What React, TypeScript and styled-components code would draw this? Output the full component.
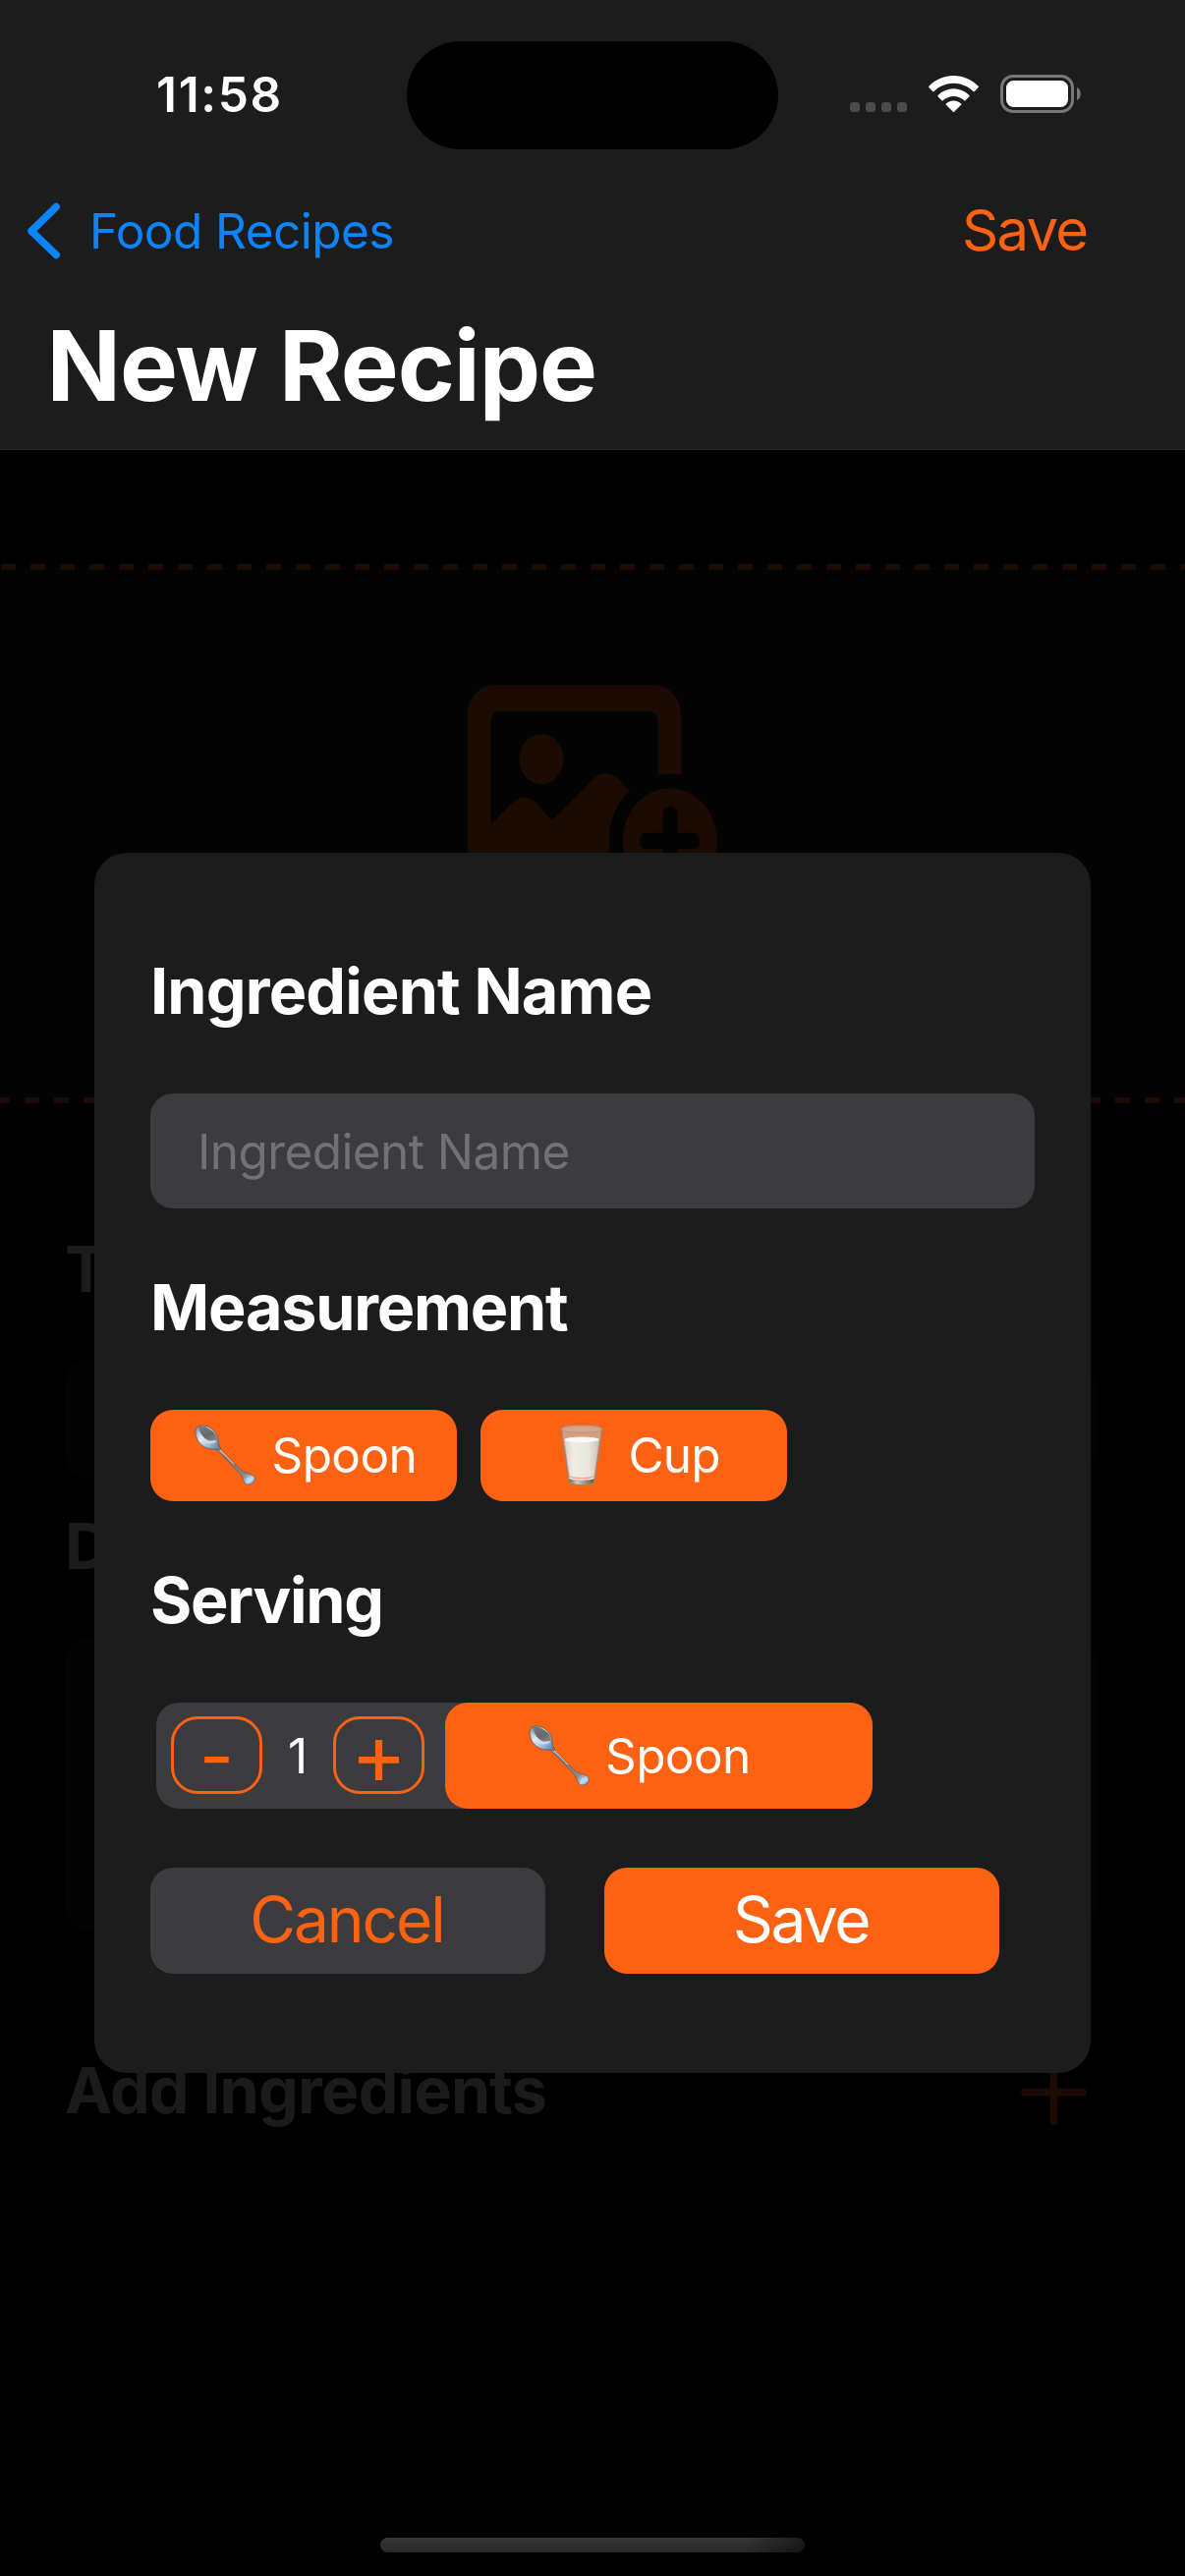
import React, { useState } from 'react';
import styled, { createGlobalStyle } from 'styled-components';

const orange = '#fc6212';
const surface = '#1c1c1c';
const control = '#3c3c3e';
const dimOrange = '#1c0b02';
const dimText = '#1b1b1b';
const dimField = '#030303';

const GlobalStyle = createGlobalStyle`
  * { box-sizing: border-box; }
  body { margin: 0; background: #000; }
`;

const Screen = styled.div`
  position: relative;
  width: 1206px;
  height: 2622px;
  overflow: hidden;
  background: #000;
  font-family: Inter, "Liberation Sans", sans-serif;
  display: flex;
  flex-direction: column;
`;

const Text = styled.span<{ $size: number; $weight?: number; $track?: number; $color?: string }>`
  display: block;
  font-size: ${p => p.$size}px;
  font-weight: ${p => p.$weight ?? 400};
  letter-spacing: ${p => p.$track ?? 0}px;
  color: ${p => p.$color ?? '#fff'};
  line-height: 80px;
  white-space: pre;
`;

/* Header */

const Header = styled.header`
  height: 458px;
  background: ${surface};
  border-bottom: 1px solid #2c2c2c;
`;

const StatusBar = styled.div`
  display: grid;
  grid-template-columns: 414px 378px 414px;
  height: 192px;
`;

const Clock = styled.div`
  padding: 56px 0 0 159px;
`;

const Island = styled.div`
  height: 110px;
  margin-top: 42px;
  border-radius: 55px;
  background: #000;
`;

const Indicators = styled.div`
  display: flex;
  align-items: flex-start;
  padding: 76px 0 0 73px;
`;

const Signal = styled.div`
  display: flex;
  gap: 6px;
  margin: 28px 22px 0 0;
`;

const SignalDot = styled.i`
  width: 10px;
  height: 10px;
  border-radius: 3.5px;
  background: #4c4c4c;
`;

const Wifi = styled.svg`
  width: 51px;
  height: 37px;
  margin: 1px 22px 0 0;
`;

const Battery = styled.svg`
  width: 82px;
  height: 39px;
`;

const NavBar = styled.nav`
  display: flex;
  align-items: center;
  justify-content: space-between;
  height: 86px;
  padding: 0 99.5px 0 26px;
`;

const BackLink = styled.div`
  display: flex;
  align-items: center;
`;

const Chevron = styled.svg`
  width: 38px;
  height: 60px;
  margin-right: 27px;
`;

const NavSave = styled.div`
  margin-top: -2px;
`;

const TitleRow = styled.h1`
  margin: 0;
  padding: 54px 0 0 47.5px;
`;

/* Dimmed form behind the dialog */

const Form = styled.main`
  display: flex;
  flex-direction: column;
`;

const PhotoPanel = styled.div`
  display: flex;
  justify-content: center;
  align-items: flex-start;
  height: 549px;
  margin-top: 116px;
  padding-top: 123px;
  background:
    repeating-linear-gradient(90deg, transparent 0 1px, ${dimOrange} 1px 16px, transparent 16px 30px) top / 100% 6px no-repeat,
    repeating-linear-gradient(90deg, ${dimOrange} 0 10px, transparent 10px 25px, ${dimOrange} 25px 30px) bottom / 100% 6px no-repeat,
    linear-gradient(${dimField}, ${dimField}) center / 100% 543px no-repeat;
`;

const FormBody = styled.div`
  display: flex;
  flex-direction: column;
  padding: 129px 90px 0 66px;
`;

const DimField = styled.div<{ $height: number }>`
  height: ${p => p.$height}px;
  margin: 52px 0 30px;
  border-radius: 24px;
  background: ${dimField};
`;

const AddRow = styled.div`
  display: flex;
  align-items: center;
  justify-content: space-between;
  margin-top: 92px;
  padding-right: 10px;
`;

const AddIcon = styled.svg`
  width: 67px;
  height: 67px;
  margin-top: 3px;
`;

/* Dialog */

const Dialog = styled.section`
  position: absolute;
  left: 96px;
  top: 868px;
  width: 1014px;
  height: 1242px;
  padding: 101px 57px;
  border-radius: 33px;
  background: ${surface};
`;

const Group = styled.div<{ $gap: number; $after: number }>`
  display: flex;
  flex-direction: column;
  gap: ${p => p.$gap}px;
  margin-bottom: ${p => p.$after}px;
`;

const NameField = styled.div`
  display: flex;
  align-items: center;
  height: 117px;
  padding-left: 48px;
  border-radius: 23px;
  background: ${control};
`;

const Row = styled.div<{ $gap: number }>`
  display: flex;
  gap: ${p => p.$gap}px;
`;

const UnitButton = styled.div<{ $width: number; $height: number; $start: number }>`
  display: flex;
  align-items: center;
  gap: 16.5px;
  width: ${p => p.$width}px;
  height: ${p => p.$height}px;
  padding: 0 0 1px ${p => p.$start}px;
  border-radius: 23px;
  background: ${orange};
`;

const Emoji = styled.svg`
  flex: none;
  width: 62px;
  height: 62px;
`;

const Stepper = styled.div`
  display: flex;
  align-items: center;
  width: 729px;
  height: 108px;
  margin-left: 6px;
  padding-left: 15px;
  border-radius: 23px;
  background: ${control};
`;

const StepButton = styled.div<{ $lift?: number }>`
  display: flex;
  align-items: center;
  justify-content: center;
  width: 93px;
  height: 79px;
  margin-bottom: 1px;
  padding-bottom: ${p => p.$lift ?? 0}px;
  border: 3px solid ${orange};
  border-radius: 27px;
`;

const Count = styled.div`
  display: flex;
  justify-content: center;
  width: 72px;
`;

const UnitSlot = styled.div`
  margin-left: 21px;
`;

const ActionButton = styled.div<{ $fill: string }>`
  display: flex;
  align-items: center;
  justify-content: center;
  width: 402px;
  height: 108px;
  padding: 0 2px 3px 0;
  border-radius: 23px;
  background: ${p => p.$fill};
`;

const HomeIndicator = styled.div`
  position: absolute;
  left: 387px;
  top: 2583px;
  width: 432px;
  height: 15px;
  border-radius: 8px;
  background:
    linear-gradient(100deg, transparent 86%, rgba(0, 0, 0, 0.5) 100%),
    linear-gradient(#363636, #282828);
`;

function SpoonEmoji({ id }: { id: string }) {
  return (
    <Emoji viewBox="0 0 62 62">
      <defs>
        <linearGradient id={`${id}-rim`} x1="0" y1="0.2" x2="1" y2="0.9">
          <stop offset="0" stopColor="#8b9299" />
          <stop offset="0.3" stopColor="#e4ecf2" />
          <stop offset="0.65" stopColor="#9db9d6" />
          <stop offset="1" stopColor="#5b7696" />
        </linearGradient>
        <linearGradient id={`${id}-cup`} x1="0.2" y1="0" x2="0.8" y2="1">
          <stop offset="0" stopColor="#77797a" />
          <stop offset="0.6" stopColor="#666869" />
          <stop offset="1" stopColor="#8a8480" />
        </linearGradient>
        <linearGradient id={`${id}-stem`} x1="0" y1="0" x2="1" y2="1">
          <stop offset="0" stopColor="#a9c4dd" />
          <stop offset="0.3" stopColor="#76797c" />
          <stop offset="0.75" stopColor="#8d8882" />
          <stop offset="0.88" stopColor="#b9d3ee" />
          <stop offset="1" stopColor="#7c8894" />
        </linearGradient>
      </defs>
      <path
        d="M19 22 C22 24 24 25 26 26 L47 46 C50 48.500 54 49.500 58 51 C62 53 62.500 57 59.500 59 C57 61.500 53 62 51 59 C49 55 47.500 51 45 48.500 L25 28 C23 26 21 25 18 24 Z"
        fill={`url(#${id}-stem)`}
        stroke="#5d6165"
        strokeWidth="0.8"
      />
      <path d="M24.500 24.500 L40 40.200" stroke="#d6dee6" strokeWidth="1" fill="none" />
      <path
        d="M1.500 4 C4 0 11 0 16 3.500 C21 7 24 12 24 17 C24 20 25 22.500 27 25 C25 26.500 22 25 18.500 25 C13 25 7 22 3.500 16.500 C1 12 0 7 1.500 4 Z"
        fill={`url(#${id}-rim)`}
        stroke="#5c6268"
        strokeWidth="0.9"
      />
      <path
        d="M4 2.500 C8 0.300 14 2.500 18.500 7 C21.500 10 23 13.500 22.800 16.500 C19 15.500 17 18 14 16 C9 14 5.500 9 4 2.500 Z"
        fill={`url(#${id}-cup)`}
      />
      <path d="M2.500 5.500 C4 12 9 17 13.500 16.500 C16 17.500 19 15.500 22.500 16.500 C20 20 12 21 7 16 C4 13 2.500 9 2.500 5.500 Z" fill="#d7e2ea" opacity="0.8" />
      <path d="M52.500 58 C52.500 54.500 55.500 52.500 59.500 54 C60 56.500 57 59.500 53.500 59.500 Z" fill="#bcd7f3" />
    </Emoji>
  );
}

function GlassEmoji() {
  return (
    <Emoji viewBox="0 0 62 62">
      <defs>
        <linearGradient id="milk" x1="0" x2="1" y1="0" y2="0">
          <stop offset="0" stopColor="#d6d3c9" />
          <stop offset="0.25" stopColor="#f0ede5" />
          <stop offset="0.7" stopColor="#e9e6dc" />
          <stop offset="1" stopColor="#c9c5ba" />
        </linearGradient>
        <linearGradient id="glass" x1="0" x2="0" y1="0" y2="1">
          <stop offset="0" stopColor="#dd9a77" />
          <stop offset="1" stopColor="#eba98a" />
        </linearGradient>
        <linearGradient id="base" x1="0" x2="1" y1="0" y2="0">
          <stop offset="0" stopColor="#6f6a65" />
          <stop offset="0.3" stopColor="#cfcbc4" />
          <stop offset="0.65" stopColor="#96918b" />
          <stop offset="1" stopColor="#5f5a55" />
        </linearGradient>
      </defs>
      <path d="M10.500 5 L18 57.500 C19 62.300 43 62.300 44 57.500 L51.500 5 Z" fill="url(#glass)" stroke="#8e8a86" strokeWidth="1.200" />
      <path d="M13.500 15.500 L18.700 52 C22 54.500 40 54.500 43.300 52 L48.500 15.500 Z" fill="url(#milk)" />
      <ellipse cx="31" cy="15.300" rx="17.600" ry="2.800" fill="#fbfaf6" />
      <path d="M18.300 55 C23 57.500 39 57.500 43.700 55 L43.300 58.500 C40 61.800 22 61.800 18.700 58.500 Z" fill="url(#base)" />
      <path d="M18.500 54.300 C23 56.500 39 56.500 43.500 54.300" fill="none" stroke="#f4f1ea" strokeWidth="1.200" />
      <ellipse cx="31" cy="4.800" rx="20.300" ry="3.800" fill="#d9a58a" stroke="#a99c94" strokeWidth="1.200" />
    </Emoji>
  );
}

function PhotoIcon() {
  return (
    <svg width="256" height="230" viewBox="475 697 256 230" fill={dimOrange}>
      <mask id="badge-gap">
        <rect x="475" y="697" width="256" height="230" fill="#fff" />
        <ellipse cx="681.700" cy="856" rx="62" ry="68.500" fill="#000" />
      </mask>
      <mask id="badge-plus">
        <rect x="475" y="697" width="256" height="230" fill="#fff" />
        <rect x="674.300" y="821" width="15" height="70" rx="7.500" fill="#000" />
        <rect x="650.700" y="847.800" width="61.600" height="16.400" rx="7.500" fill="#000" />
      </mask>
      <g mask="url(#badge-gap)">
        <path
          fillRule="evenodd"
          d="M506 697 H663 C682 697 693.300 710 693.300 731 V881 C693.300 902 682 915 663 915 H506 C487 915 475.700 902 475.700 881 V731 C475.700 710 487 697 506 697 Z M510 723.700 C503 723.700 499.300 728 499.300 736 V839.500 L522.500 816 Q533 807.500 544 816 L561.700 834.800 L604 792.500 Q616 782.500 629 792.500 L650 814 L669.700 834 V736 C669.700 728 666 723.700 659 723.700 Z"
        />
        <ellipse cx="551" cy="772.800" rx="22.500" ry="25.500" />
      </g>
      <ellipse cx="681.700" cy="856" rx="48" ry="53.700" mask="url(#badge-plus)" />
    </svg>
  );
}

export default function App() {
  const [serving] = useState(1);
  return (
    <>
      <GlobalStyle />
      <Screen>
        <Header>
          <StatusBar>
            <Clock>
              <Text $size={49.5} $weight={600} $track={1.7}>11:58</Text>
            </Clock>
            <Island />
            <Indicators>
              <Signal>
                <SignalDot /><SignalDot /><SignalDot /><SignalDot />
              </Signal>
              <Wifi viewBox="0.5 0.27 16 11.2" preserveAspectRatio="none" fill="#fff">
                <path d="M8.500 2.600c2.300 0 4.600.9 6.300 2.500.1.1.3.1.4 0l1.200-1.200c.1-.1.1-.3 0-.4C12-.8 5-.8.6 3.500c-.1.1-.1.3 0 .4l1.200 1.200c.1.1.3.1.4 0C3.900 3.500 6.200 2.600 8.500 2.600z" />
                <path d="M8.500 6.600c1.300 0 2.500.5 3.400 1.300.1.1.3.1.4 0l1.200-1.200c.1-.1.1-.3 0-.4-2.800-2.700-7.200-2.700-10 0-.1.1-.1.3 0 .4l1.200 1.200c.1.1.3.1.4 0 1-.8 2.200-1.300 3.400-1.300z" />
                <path d="M10.900 9.300c.1-.1.1-.3 0-.4-1.400-1.200-3.400-1.200-4.800 0-.1.1-.1.3 0 .4l2.200 2.100c.1.1.3.1.4 0l2.200-2.100z" />
              </Wifi>
              <Battery viewBox="0 0 82 39">
                <rect x="1.500" y="1.500" width="72" height="36" rx="11.500" fill="none" stroke="#777" strokeWidth="3" />
                <rect x="6" y="6" width="63" height="27" rx="7.500" fill="#fff" />
                <path d="M78 13 C80.500 14 81.700 16.500 81.700 19.500 C81.700 22.500 80.500 25 78 26 Z" fill="#777" />
              </Battery>
            </Indicators>
          </StatusBar>
          <NavBar>
            <BackLink>
              <Chevron viewBox="0 0 38 60" fill="none" stroke="#0a84ff" strokeWidth="7.500" strokeLinecap="round" strokeLinejoin="round">
                <path d="M31.200 5.500 L6 30.200 L31.200 54.500" />
              </Chevron>
              <Text $size={49.5} $track={-0.55} $color="#0a84ff">Food Recipes</Text>
            </BackLink>
            <NavSave>
              <Text $size={58} $track={-1.7} $color={orange}>Save</Text>
            </NavSave>
          </NavBar>
          <TitleRow>
            <Text $size={99} $weight={700} $track={-1.05}>New Recipe</Text>
          </TitleRow>
        </Header>

        <Form>
          <PhotoPanel>
            <PhotoIcon />
          </PhotoPanel>
          <FormBody>
            <Text $size={64.6} $weight={700} $color={dimText}>T</Text>
            <DimField $height={120} />
            <Text $size={64.6} $weight={700} $color={dimText}>D</Text>
            <DimField $height={300} />
            <AddRow>
              <Text $size={64.6} $weight={700} $track={-0.8} $color={dimText}>Add Ingredients</Text>
              <AddIcon viewBox="0 0 67 67" stroke={dimOrange} strokeWidth="7.500" strokeLinecap="round">
                <path d="M33.500 3.800 V63.200 M3.800 33.500 H63.200" />
              </AddIcon>
            </AddRow>
          </FormBody>
        </Form>

        <Dialog>
          <Group $gap={64} $after={61}>
            <Text $size={64.6} $weight={700} $track={-0.8}>Ingredient Name</Text>
            <NameField>
              <Text $size={49.5} $track={-0.58} $color="#727276">Ingredient Name</Text>
            </NameField>
          </Group>
          <Group $gap={64} $after={61}>
            <Text $size={64.6} $weight={700} $track={-1.2}>Measurement</Text>
            <Row $gap={24}>
              <UnitButton $width={312} $height={93} $start={45}>
                <SpoonEmoji id="measure" />
                <Text $size={49.5} $track={-0.6}>Spoon</Text>
              </UnitButton>
              <UnitButton $width={312} $height={93} $start={72}>
                <GlassEmoji />
                <Text $size={49.5} $track={-0.8}>Cup</Text>
              </UnitButton>
            </Row>
          </Group>
          <Group $gap={64} $after={60}>
            <Text $size={64.6} $weight={700} $track={-1.2}>Serving</Text>
            <Stepper>
              <StepButton>
                <Text $size={77} $color={orange}>-</Text>
              </StepButton>
              <Count>
                <Text $size={49.5}>{serving}</Text>
              </Count>
              <StepButton $lift={4}>
                <Text $size={87} $color={orange}>+</Text>
              </StepButton>
              <UnitSlot>
                <UnitButton $width={435} $height={108} $start={84.5}>
                  <SpoonEmoji id="serving" />
                  <Text $size={49.5} $track={-0.6}>Spoon</Text>
                </UnitButton>
              </UnitSlot>
            </Stepper>
          </Group>
          <Row $gap={60}>
            <ActionButton $fill={control}>
              <Text $size={64} $track={-2.1} $color={orange}>Cancel</Text>
            </ActionButton>
            <ActionButton $fill={orange}>
              <Text $size={64} $track={-2.4}>Save</Text>
            </ActionButton>
          </Row>
        </Dialog>

        <HomeIndicator />
      </Screen>
    </>
  );
}
